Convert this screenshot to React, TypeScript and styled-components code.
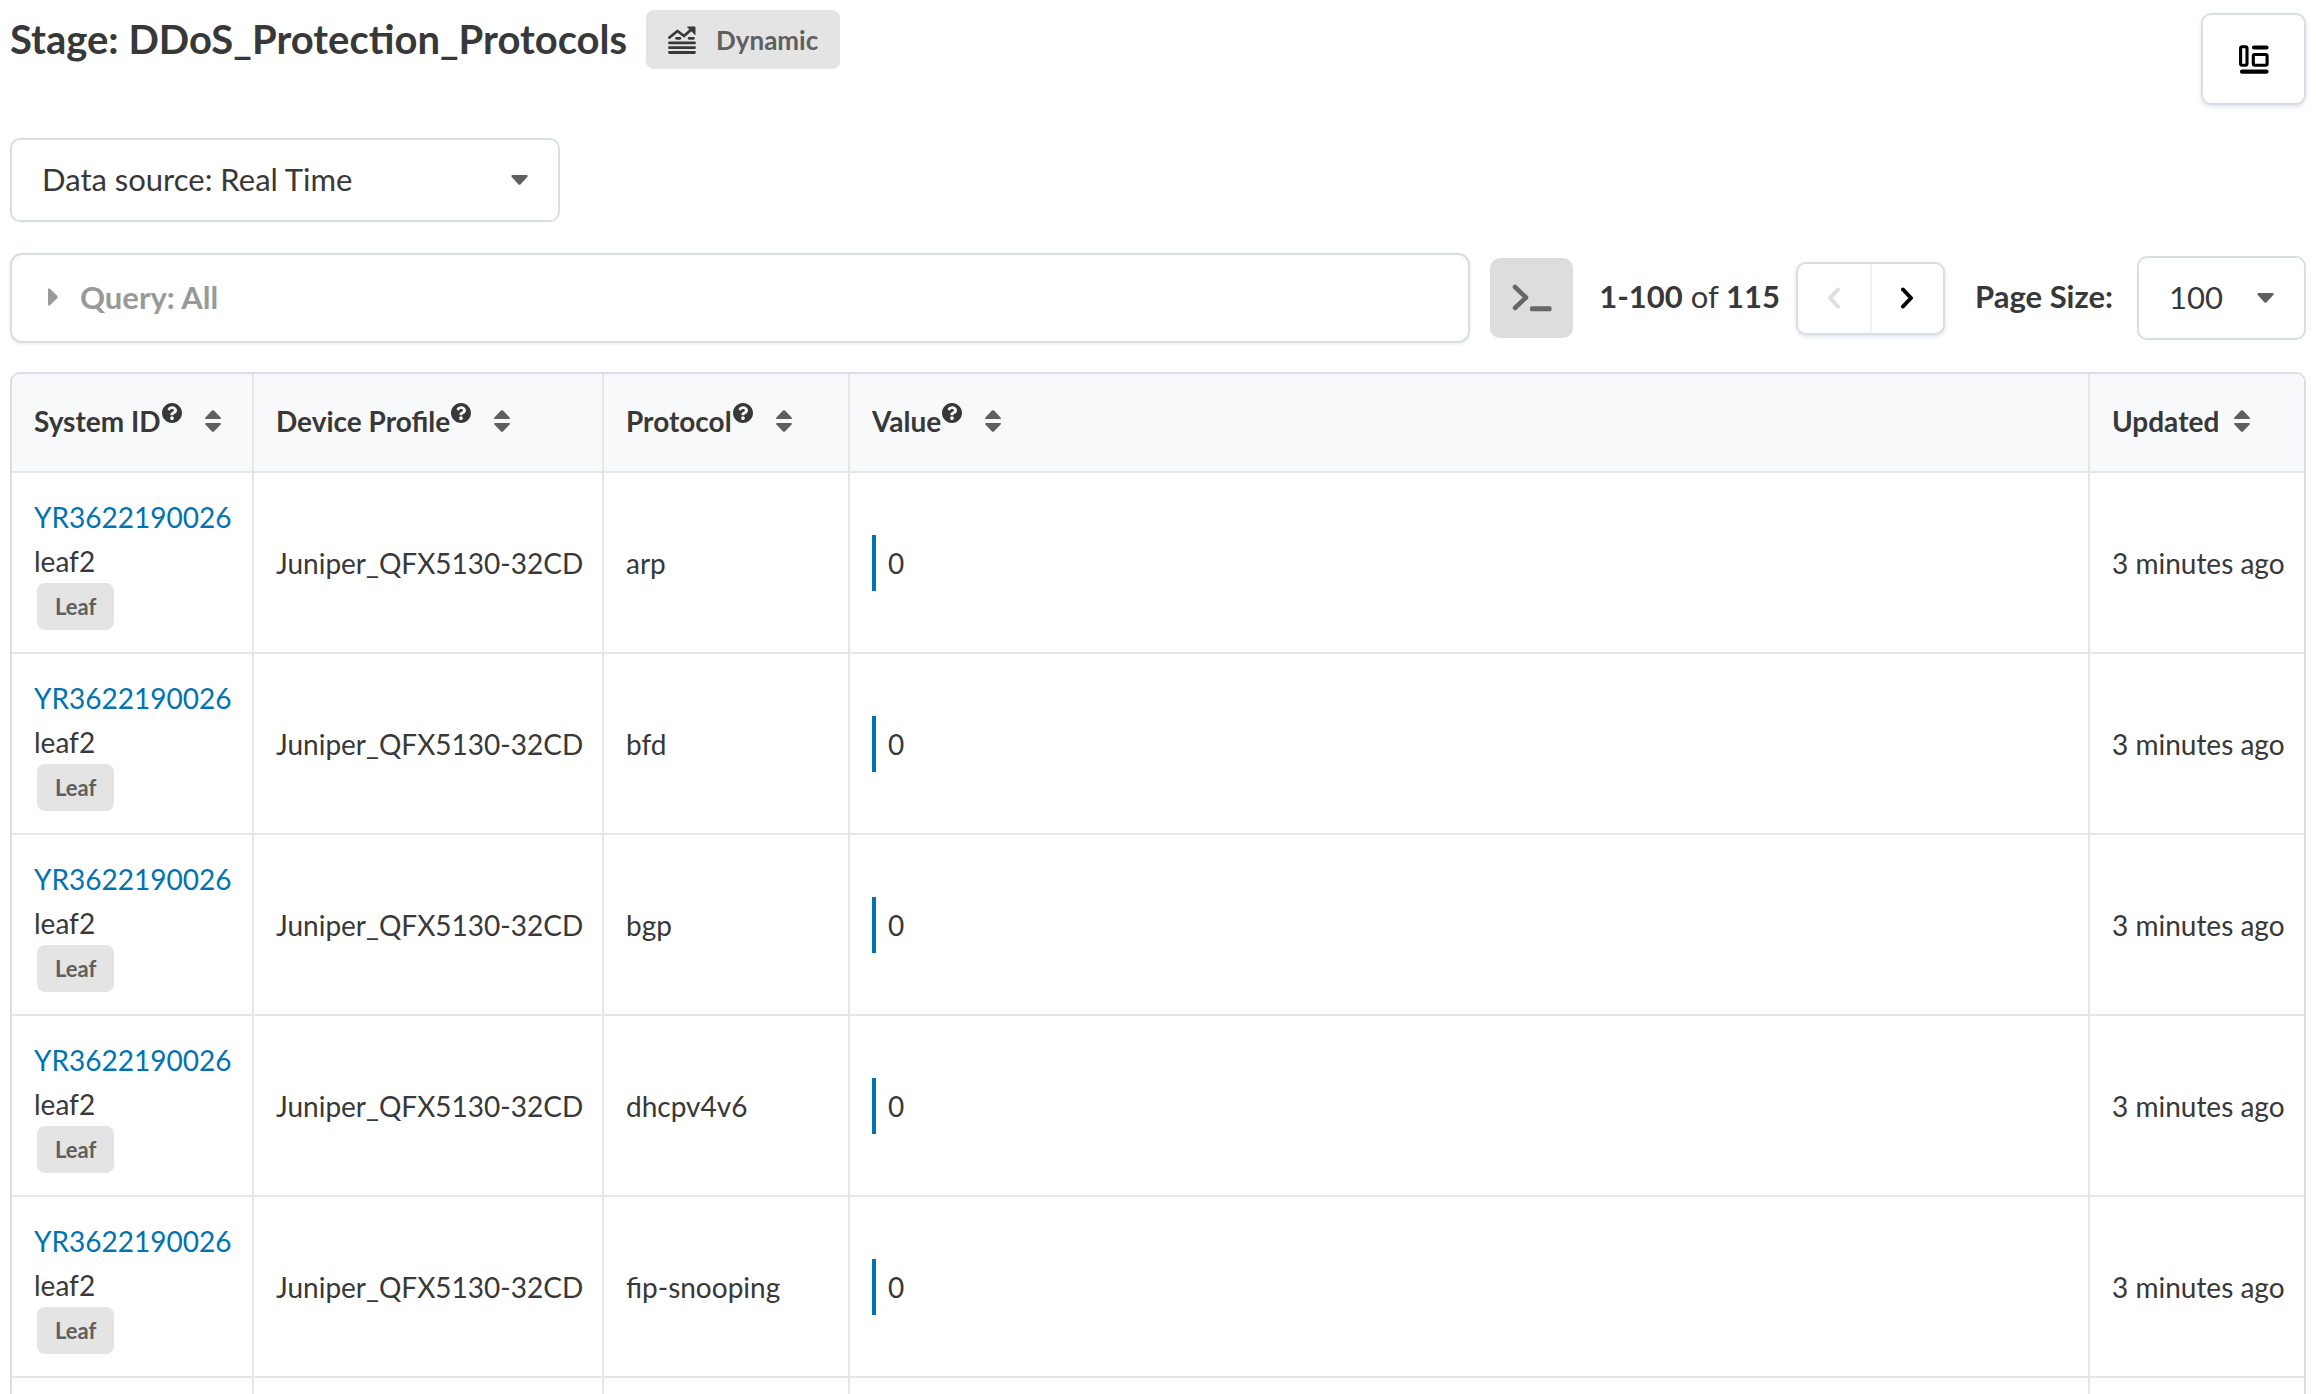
import React from "react";
import styled, { createGlobalStyle } from "styled-components";

const GlobalStyle = createGlobalStyle`
  *, *::before, *::after { box-sizing: border-box; }
  body {
    margin: 0;
    background: #fff;
    color: #383838;
    font-family: Lato, "Liberation Sans", sans-serif;
    font-size: 28px;
    line-height: 44px;
  }
  button, select { font-family: inherit; color: inherit; cursor: pointer; }
`;

const Page = styled.main`
  height: 100vh;
  overflow: hidden;
  padding: 10px 10px 0;
`;

const Header = styled.header`
  display: flex;
  justify-content: space-between;
  align-items: flex-start;
  margin-bottom: 33px;
`;

const TitleGroup = styled.div`
  display: flex;
  align-items: center;
  gap: 19px;
`;

const Title = styled.h1`
  margin: 0;
  padding-bottom: 2px;
  font-size: 40px;
  line-height: 52px;
  font-weight: 700;
`;

const Tag = styled.span<{ $large?: boolean }>`
  display: inline-flex;
  align-items: center;
  gap: 20px;
  height: ${(p) => (p.$large ? 59 : 47)}px;
  padding: 0 ${(p) => (p.$large ? 22 : 18)}px;
  border-radius: 8px;
  background: #e4e4e4;
  color: #5f5f5f;
  font-size: ${(p) => (p.$large ? 26 : 22)}px;
  font-weight: 700;
`;

const LayoutButton = styled.button`
  display: flex;
  align-items: center;
  justify-content: center;
  width: 105px;
  height: 92px;
  margin-top: 3px;
  padding: 2px 0 0;
  border: 2px solid #d9dee6;
  border-radius: 10px;
  background: #fff;
  box-shadow: 0 2px 4px #dfe4ec;
`;

const SelectBox = styled.div<{ $width: number }>`
  display: grid;
  flex: none;
  align-items: center;
  width: ${(p) => p.$width}px;
  height: 84px;
  border: 2px solid #d9dee6;
  border-radius: 10px;
  background: #fff;

  select, svg { grid-area: 1 / 1; }
  svg { justify-self: end; margin-right: 30px; pointer-events: none; }
`;

const Select = styled.select`
  appearance: none;
  width: 100%;
  height: 100%;
  padding: 0 0 2px 30px;
  border: 0;
  background: transparent;
  font-size: 31px;
`;

const Toolbar = styled.div`
  display: flex;
  align-items: center;
  margin: 31px 0 29px;
`;

const QueryButton = styled.button`
  display: flex;
  flex: 1;
  align-items: center;
  gap: 22px;
  height: 90px;
  padding: 0 36px 2px;
  border: 2px solid #d9dee6;
  border-radius: 12px;
  background: #fff;
  box-shadow: 0 1px 3px #e6e9ef;
  color: #999;
  font-size: 31px;
  font-weight: 700;
`;

const TerminalButton = styled.button`
  display: flex;
  align-items: center;
  justify-content: center;
  width: 83px;
  height: 80px;
  margin: 0 26px 0 20px;
  padding: 0;
  border: 0;
  border-radius: 10px;
  background: #dcddde;
`;

const Range = styled.span`
  padding-bottom: 4px;
  font-size: 31px;
  white-space: nowrap;
`;

const Pager = styled.div`
  display: flex;
  width: 149px;
  height: 73px;
  margin: 0 30px 0 16px;
  border: 2px solid #d9dee6;
  border-radius: 10px;
  background: #fff;
  box-shadow: 0 2px 4px #dfe4ec;
`;

const PagerButton = styled.button`
  display: flex;
  flex: 1;
  align-items: center;
  justify-content: center;
  padding: 0;
  border: 0;
  background: transparent;
  color: #000;

  & + & { border-left: 2px solid #f1f2f4; }
  &:disabled { color: #dedede; cursor: default; }
`;

const PageSizeLabel = styled.label`
  margin-right: 24px;
  padding-bottom: 4px;
  font-size: 31px;
  font-weight: 700;
  white-space: nowrap;
`;

const Table = styled.table`
  width: 100%;
  table-layout: fixed;
  border: 2px solid #d9dee6;
  border-radius: 10px;
  border-spacing: 0;
  overflow: hidden;

  th, td {
    padding: 22px 18px 22px 22px;
    border-right: 2px solid #e6e6e8;
    border-bottom: 2px solid #e6e6e8;
    text-align: left;
    vertical-align: middle;
    white-space: nowrap;
  }
  th { padding-top: 20px; padding-bottom: 24px; }
  th:last-child, td:last-child { border-right: 0; }
`;

const HeadCell = styled.th`
  height: 99px;
  background: #f8f9fb;
`;

const BodyRow = styled.tr`
  height: 181px;
`;

const SortButton = styled.button`
  display: flex;
  align-items: center;
  padding: 0;
  border: 0;
  background: transparent;
  font-size: 28px;
  line-height: 44px;
  font-weight: 700;
`;

const HelpMark = styled.span`
  display: flex;
  align-self: flex-start;
  margin: 4px 8px 0 1px;
`;

const SortMark = styled.span`
  display: flex;
  margin-left: 15px;
`;

const SystemLink = styled.a`
  display: block;
  color: #0073b0;
  text-decoration: none;
`;

const SystemTags = styled.div`
  display: flex;
  padding-left: 3px;
`;

const Value = styled.div`
  display: flex;
  align-items: center;
  height: 56px;
  padding-left: 12px;
  border-left: 4px solid #0073b0;
`;

const Caret = () => (
  <svg width="17" height="10" viewBox="0 0 17 10" fill="#5f5f5f" aria-hidden="true">
    <path d="M1.5 0 H15.5 Q17.4 0.4 16.2 2 L9.7 9.2 Q8.5 10.2 7.3 9.2 L0.8 2 Q-0.4 0.4 1.5 0 Z" />
  </svg>
);

const QueryCaret = () => (
  <svg width="10" height="18" viewBox="0 0 10 18" fill="#999" aria-hidden="true">
    <path d="M0 1.5 Q0.4 -0.4 2 0.8 L9.2 7.8 Q10.2 9 9.2 10.2 L2 17.2 Q0.4 18.4 0 16.5 Z" />
  </svg>
);

const SortIcon = () => (
  <svg width="16" height="22" viewBox="0 0 16 22" fill="#5f5f5f" aria-hidden="true">
    <path d="M1 9 Q-0.4 9 0.4 7.5 L7 0.6 Q8 -0.2 9 0.6 L15.6 7.5 Q16.4 9 15 9 Z" />
    <path d="M1 13 Q-0.4 13 0.4 14.5 L7 21.4 Q8 22.2 9 21.4 L15.6 14.5 Q16.4 13 15 13 Z" />
  </svg>
);

const HelpIcon = () => (
  <svg width="20" height="20" viewBox="8 8 496 496" fill="#383838" aria-hidden="true">
    <path d="M504 256c0 136.997-111.043 248-248 248S8 392.997 8 256C8 119.083 119.043 8 256 8s248 111.083 248 248zM262.655 90c-54.497 0-89.255 22.957-116.549 63.758-3.536 5.286-2.353 12.415 2.715 16.258l34.699 26.310c5.205 3.947 12.621 3.008 16.665-2.122 17.864-22.658 30.113-35.797 57.303-35.797 20.429 0 45.698 13.148 45.698 32.958 0 14.976-12.363 22.667-32.534 33.976C247.128 238.528 216 254.941 216 296v4c0 6.627 5.373 12 12 12h56c6.627 0 12-5.373 12-12v-1.333c0-28.462 83.186-29.647 83.186-106.667 0-58.002-60.165-102-116.531-102zM256 338c-25.365 0-46 20.635-46 46 0 25.364 20.635 46 46 46s46-20.636 46-46c0-25.365-20.635-46-46-46z" />
  </svg>
);

const StreamIcon = () => (
  <svg width="28" height="28" viewBox="0 0 28 28" fill="none" stroke="#383838" aria-hidden="true">
    <path d="M1.5 11.5 L9.5 5 L16 10 L25 2" strokeWidth="2.8" strokeLinecap="round" strokeLinejoin="round" />
    <path d="M19.5 1 H27 V8.5 Z" fill="#383838" strokeWidth="1" strokeLinejoin="round" />
    <path d="M8.5 12.3 H12 M21 12.3 H25.5" strokeWidth="2.7" strokeLinecap="round" />
    <path d="M1.5 16.9 H26.5 M1.5 21.7 H26.5 M1.5 26.5 H26.5" strokeWidth="2.8" strokeLinecap="round" />
  </svg>
);

const LayoutIcon = () => (
  <svg width="30" height="30" viewBox="0 0 30 30" fill="none" stroke="#000" aria-hidden="true">
    <rect x="1.6" y="1.8" width="6.4" height="18.5" rx="1.5" strokeWidth="3.1" />
    <rect x="14.3" y="9.5" width="13.8" height="10.8" rx="1.5" strokeWidth="3.1" />
    <path d="M15 2.5 H27.5 M3 26.7 H27.5" strokeWidth="4.2" strokeLinecap="round" />
  </svg>
);

const TerminalIcon = () => (
  <svg width="40" height="28" viewBox="0 0 40 28" fill="none" stroke="#666" aria-hidden="true">
    <path d="M3 3 L14 13.5 L3 24" strokeWidth="4.5" strokeLinecap="round" strokeLinejoin="round" />
    <rect x="18" y="22.3" width="21.5" height="5" rx="1.5" fill="#666" stroke="none" />
  </svg>
);

const Chevron = ({ back }: { back?: boolean }) => (
  <svg width="14" height="22" viewBox="0 0 14 22" fill="none" stroke="currentColor" aria-hidden="true">
    <path
      d={back ? "M11 2.5 L3 11 L11 19.5" : "M3 2.5 L11 11 L3 19.5"}
      strokeWidth="4"
      strokeLinecap="round"
      strokeLinejoin="round"
    />
  </svg>
);

const columns = [
  { title: "System ID", help: true, width: 242 },
  { title: "Device Profile", help: true, width: 350 },
  { title: "Protocol", help: true, width: 246 },
  { title: "Value", help: true },
  { title: "Updated", help: false, width: 214 },
];

const protocols = ["arp", "bfd", "bgp", "dhcpv4v6", "fip-snooping"];

const Column = styled.col<{ $width?: number }>`
  width: ${(p) => (p.$width ? `${p.$width}px` : "auto")};
`;

export default function App() {
  return (
    <Page>
      <GlobalStyle />
      <Header>
        <TitleGroup>
          <Title>Stage: DDoS_Protection_Protocols</Title>
          <Tag $large>
            <StreamIcon />
            Dynamic
          </Tag>
        </TitleGroup>
        <LayoutButton type="button" aria-label="Layout">
          <LayoutIcon />
        </LayoutButton>
      </Header>

      <SelectBox $width={550}>
        <Select aria-label="Data source" defaultValue="real">
          <option value="real">Data source: Real Time</option>
        </Select>
        <Caret />
      </SelectBox>

      <Toolbar>
        <QueryButton type="button">
          <QueryCaret />
          Query: All
        </QueryButton>
        <TerminalButton type="button" aria-label="Query console">
          <TerminalIcon />
        </TerminalButton>
        <Range>
          <b>1-100</b> of <b>115</b>
        </Range>
        <Pager>
          <PagerButton type="button" aria-label="Previous page" disabled>
            <Chevron back />
          </PagerButton>
          <PagerButton type="button" aria-label="Next page">
            <Chevron />
          </PagerButton>
        </Pager>
        <PageSizeLabel htmlFor="page-size">Page Size:</PageSizeLabel>
        <SelectBox $width={169}>
          <Select id="page-size" defaultValue="100">
            <option value="100">100</option>
          </Select>
          <Caret />
        </SelectBox>
      </Toolbar>

      <Table>
        <colgroup>
          {columns.map((c) => (
            <Column key={c.title} $width={c.width} />
          ))}
        </colgroup>
        <thead>
          <tr>
            {columns.map((c) => (
              <HeadCell key={c.title} scope="col">
                <SortButton type="button">
                  {c.title}
                  {c.help && (
                    <HelpMark>
                      <HelpIcon />
                    </HelpMark>
                  )}
                  <SortMark>
                    <SortIcon />
                  </SortMark>
                </SortButton>
              </HeadCell>
            ))}
          </tr>
        </thead>
        <tbody>
          {protocols.map((protocol) => (
            <BodyRow key={protocol}>
              <td>
                <SystemLink href="#system">YR3622190026</SystemLink>
                <div>leaf2</div>
                <SystemTags>
                  <Tag>Leaf</Tag>
                </SystemTags>
              </td>
              <td>Juniper_QFX5130-32CD</td>
              <td>{protocol}</td>
              <td>
                <Value>0</Value>
              </td>
              <td>3 minutes ago</td>
            </BodyRow>
          ))}
          <BodyRow aria-hidden="true">
            {columns.map((c) => (
              <td key={c.title} />
            ))}
          </BodyRow>
        </tbody>
      </Table>
    </Page>
  );
}
